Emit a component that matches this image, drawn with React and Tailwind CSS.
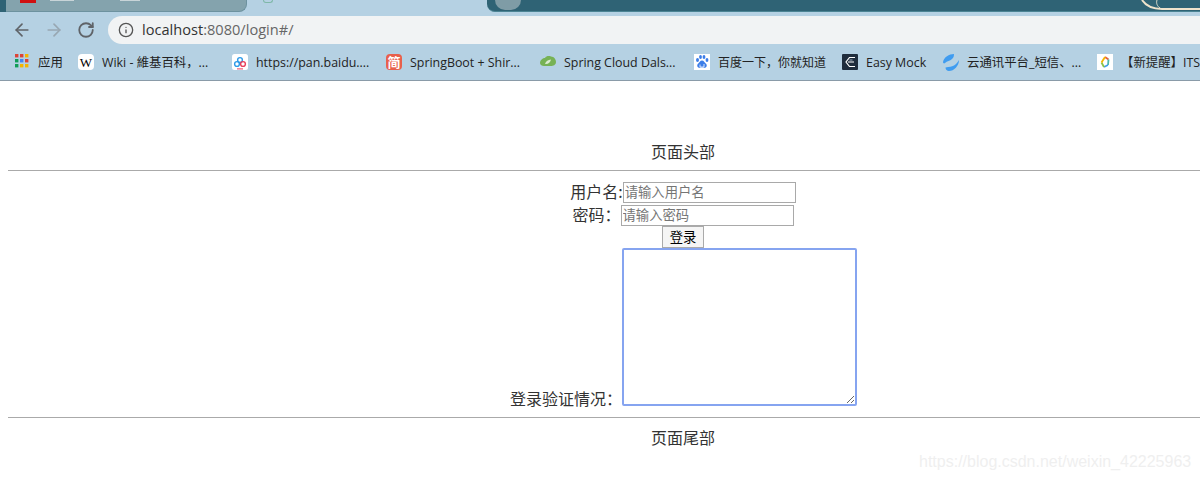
import React from "react";
import { ArrowLeft, ArrowRight, RotateCw, Info } from "lucide-react";

const AppsIcon = () => (
  <svg width="14" height="14" viewBox="0 0 14 14">
    {[
      ["#db4437", "#db4437", "#f4b400"],
      ["#0f9d58", "#4285f4", "#db4437"],
      ["#0f9d58", "#f4b400", "#f4b400"],
    ].map((row, y) =>
      row.map((color, x) => (
        <rect key={`${x}-${y}`} x={x * 5} y={y * 5} width="3.4" height="3.4" fill={color} />
      ))
    )}
  </svg>
);

const WikiIcon = () => (
  <span className="w-4 h-4 bg-white rounded-sm flex items-center justify-center text-[13px] leading-none text-black font-['Liberation_Serif',serif]">
    W
  </span>
);

const PanIcon = () => (
  <svg width="16" height="16" viewBox="0 0 16 16">
    <rect width="16" height="16" rx="2.5" fill="#fff" />
    <circle cx="8" cy="6" r="2.4" fill="none" stroke="#2f9be8" strokeWidth="1.4" />
    <circle cx="5" cy="10" r="2.4" fill="none" stroke="#2f9be8" strokeWidth="1.4" />
    <circle cx="11" cy="10" r="2.4" fill="none" stroke="#e8405c" strokeWidth="1.4" />
    <rect x="5" y="14.4" width="6" height="1" fill="#e8405c" />
  </svg>
);

const JianIcon = () => (
  <span className="w-4 h-4 bg-[#e8604c] rounded-sm flex items-center justify-center text-[13px] font-bold leading-none text-white">
    简
  </span>
);

const LeafIcon = () => (
  <svg width="16" height="16" viewBox="0 0 16 16">
    <path d="M0 9c0-3 3-5 5-5 1-2 4-2.500 6-1.500 3 0 5 3 5 5.500 0 3-3 4-5 4H4c-2 0-4-1-4-3z" fill="#77b255" />
    <path d="M5 10c1-3 3-4 6-4.500-.5 3-3 5-6 4.500z" fill="#dcebd0" />
  </svg>
);

const BaiduIcon = () => (
  <svg width="16" height="16" viewBox="0 0 16 16">
    <rect width="16" height="16" fill="#fff" />
    <ellipse cx="3.500" cy="6" rx="1.500" ry="2" fill="#3b7de8" />
    <ellipse cx="6.500" cy="3" rx="1.400" ry="2" fill="#3b7de8" />
    <ellipse cx="10" cy="3" rx="1.400" ry="2" fill="#3b7de8" />
    <ellipse cx="13" cy="6" rx="1.400" ry="2" fill="#3b7de8" />
    <path d="M8 6.500c2 0 2.500 2 4 3.200 1.600 1.500.5 4.500-2 4-1.400-.2-2.800-.2-4 0-2.500.5-3.600-2.500-2-4C5.500 8.500 6 6.500 8 6.500z" fill="#3b7de8" />
    <path d="M6 10.500v2.500h4v-3" stroke="#fff" strokeWidth=".8" fill="none" />
  </svg>
);

const MockIcon = () => (
  <svg width="16" height="16" viewBox="0 0 16 16">
    <rect width="16" height="16" rx="1" fill="#1f2d3d" />
    <path d="M13 3.500H7.500L4 8l3.500 4.500H13M6 8h6" stroke="#fff" strokeWidth="1.200" fill="none" />
    <path d="M7.500 6h3" stroke="#9fb0c0" strokeWidth="1" />
  </svg>
);

const CloudIcon = () => (
  <svg width="16" height="17" viewBox="0 0 16 17">
    <path d="M11 0C6 0 1 3 0 8c0 1 1 2 2 1 2-2 5-2 7-4 1.500-1 2-3 2-5z" fill="#3f9cf0" />
    <path d="M16 6c0 6-5 11-10 11-2 0-3.500-1.500-3.500-3.500 4-1 6-.5 8.500-2 2-1 3.500-3 5-5.500z" fill="#3f9cf0" />
  </svg>
);

const RingIcon = () => (
  <svg width="16" height="16" viewBox="0 0 16 16">
    <rect width="16" height="16" fill="#fff" />
    <path d="M8 3l3.500 2.500" stroke="#e8603c" strokeWidth="1.800" fill="none" />
    <path d="M11.500 5.500L11 11" stroke="#4db6ac" strokeWidth="1.800" fill="none" />
    <path d="M11 11l-4 2" stroke="#3f9cf0" strokeWidth="1.800" fill="none" />
    <path d="M7 13L4.500 8.500" stroke="#8bc34a" strokeWidth="1.800" fill="none" />
    <path d="M4.500 8.500L8 3" stroke="#f4b400" strokeWidth="1.800" fill="none" />
  </svg>
);

const bookmarks = [
  { icon: <AppsIcon />, label: "应用", left: 15, textLeft: 38 },
  { icon: <WikiIcon />, label: "Wiki - 維基百科，...", left: 78, textLeft: 102 },
  { icon: <PanIcon />, label: "https://pan.baidu....", left: 232, textLeft: 256 },
  { icon: <JianIcon />, label: "SpringBoot + Shir...", left: 386, textLeft: 410 },
  { icon: <LeafIcon />, label: "Spring Cloud Dals...", left: 540, textLeft: 564 },
  { icon: <BaiduIcon />, label: "百度一下，你就知道", left: 694, textLeft: 718, size: "text-[12px]" },
  { icon: <MockIcon />, label: "Easy Mock", left: 842, textLeft: 866 },
  { icon: <CloudIcon />, label: "云通讯平台_短信、...", left: 943, textLeft: 967 },
  { icon: <RingIcon />, label: "【新提醒】ITSC", left: 1097, textLeft: 1121 },
];

const Browser = () => (
  <header className="bg-[#b5d1e3] border-b border-[#8a9ba8] h-[81px] overflow-hidden font-['Open_Sans','Noto_Sans_CJK_SC',sans-serif]">
    <div className="h-4 flex overflow-hidden">
      <div className="w-[6px] h-3 bg-[#2f6375]" />
      <div className="w-[241px] h-3 bg-[#84a3ad] rounded-br-lg border-b border-r border-[#6d929f] pl-[14px] flex items-start">
        <div className="w-4 h-[3px] bg-[#d01010]" />
        <div className="w-[24px] h-[1px] ml-[14px] bg-[#c8d4d8]" />
        <div className="w-[20px] h-[1px] ml-[46px] bg-[#c8d4d8]" />
      </div>
      <div className="w-[240px] pl-[16px] flex items-start">
        <div className="w-[10px] h-[3px] rounded-b-full border-b border-x border-[#7fb8a8]" />
      </div>
      <div className="flex-1 h-3 bg-[#2f6375] border-b border-[#4c8494] rounded-bl-lg pl-[8px] flex justify-between">
        <div className="w-[26px] h-[10px] rounded-b-full bg-[#7f9ca6]" />
        <svg width="60" height="12" viewBox="0 0 60 12">
          <path d="M2 0c4 6 10 9 20 9h38" stroke="#efe3cc" strokeWidth="2" fill="none" />
          <path d="M17 0c-1 3 0 6 3 8" stroke="#d8d8c8" strokeWidth="1" fill="none" />
        </svg>
      </div>
    </div>
    <div className="h-7 flex items-center">
      <div className="w-[108px] flex items-center pl-[12px]">
        <ArrowLeft size={20} strokeWidth={2} className="text-[#5f6368]" />
        <ArrowRight size={20} strokeWidth={2} className="text-[#98a7b2] ml-[12px]" />
        <RotateCw size={18} strokeWidth={2.400} className="text-[#5f6368] ml-[13px]" />
      </div>
      <div className="flex-1 h-7 bg-[#f1f3f4] rounded-l-full flex items-center pl-[10px] gap-[8px] text-[14.6px]">
        <Info size={16} strokeWidth={2} className="text-[#555]" />
        <span className="text-[#333]">
          localhost<span className="text-[#666]">:8080/login#/</span>
        </span>
      </div>
    </div>
    <div className="h-9 relative text-[12.400px] text-[#222]">
      {bookmarks.map((b) => (
        <div key={b.label} className="contents">
          <div className="absolute top-[10px]" style={{ left: b.left }}>
            {b.icon}
          </div>
          <span className={`absolute top-[10px] whitespace-nowrap ${b.size || ""}`} style={{ left: b.textLeft }}>
            {b.label}
          </span>
        </div>
      ))}
    </div>
  </header>
);

const Login = () => (
  <main className="w-[1350px] ml-2 pt-[58px] text-center text-[16px] text-[#333] font-['Noto_Sans_CJK_SC','Noto_Sans',sans-serif]">
    <div className="leading-6">页面头部</div>
    <hr className="mt-[7px] border-t border-[#aaa] mb-[11px]" />
    <div className="flex justify-center items-start h-[23px]">
      <span className="leading-[19px]">用户名:</span>
      <input
        placeholder="请输入用户名"
        className="w-[173px] h-[21px] border border-[#a9a9a9] px-[1px] pb-[2px] text-[13.333px] placeholder:text-[#757575] outline-none"
      />
    </div>
    <div className="flex justify-center items-start h-[21px]">
      <span className="w-[48px] text-left leading-[19px]">密码：</span>
      <input
        placeholder="请输入密码"
        className="w-[173px] h-[21px] border border-[#a9a9a9] px-[1px] pb-[2px] text-[13.333px] placeholder:text-[#757575] outline-none"
      />
    </div>
    <div className="flex justify-center">
      <button className="w-[42px] h-[22px] border border-[#aaa] bg-[#f5f5f5] text-[13.333px] text-black leading-none">
        登录
      </button>
    </div>
    <div className="flex justify-center items-end">
      <span className="leading-5 -mb-[2px] w-[113px] text-left whitespace-nowrap">登录验证情况：</span>
      <textarea
        className="w-[235px] h-[158px] -ml-px -mr-px border-2 border-[#86a4f0] rounded-[2px] outline-none bg-white"
        readOnly
      />
    </div>
    <hr className="mt-[11px] border-t border-[#aaa] mb-[7px]" />
    <div className="leading-6">页面尾部</div>
  </main>
);

export default function App() {
  return (
    <div className="relative w-[1200px] h-[478px] overflow-hidden bg-white">
      <Browser />
      <Login />
      <span className="absolute left-[919px] top-[450px] text-[16px] text-[#efefef] font-['Liberation_Sans',sans-serif] whitespace-nowrap">
        https://blog.csdn.net/weixin_42225963
      </span>
    </div>
  );
}
